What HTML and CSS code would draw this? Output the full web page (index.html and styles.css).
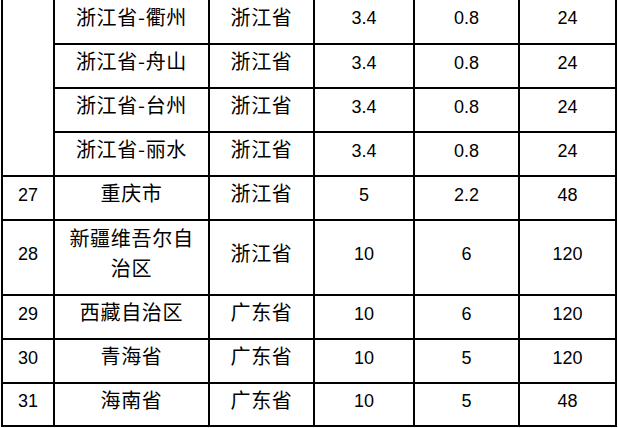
FILE: index.html
```html
<!DOCTYPE html>
<html lang="zh">
<head>
<meta charset="utf-8">
<title>表格</title>
<link rel="stylesheet" href="styles.css">
</head>
<body>
<table class="grid">
  <colgroup>
    <col class="c1"><col class="c2"><col class="c3"><col class="c4"><col class="c5"><col class="c6">
  </colgroup>
  <tbody>
    <tr class="first">
      <td class="idx" rowspan="4"></td>
      <td class="zh">浙江省-衢州</td><td class="zh">浙江省</td><td class="num">3.4</td><td class="num">0.8</td><td class="num">24</td>
    </tr>
    <tr>
      <td class="zh">浙江省-舟山</td><td class="zh">浙江省</td><td class="num">3.4</td><td class="num">0.8</td><td class="num">24</td>
    </tr>
    <tr>
      <td class="zh">浙江省-台州</td><td class="zh">浙江省</td><td class="num">3.4</td><td class="num">0.8</td><td class="num">24</td>
    </tr>
    <tr>
      <td class="zh">浙江省-丽水</td><td class="zh">浙江省</td><td class="num">3.4</td><td class="num">0.8</td><td class="num">24</td>
    </tr>
    <tr>
      <td class="idx num">27</td><td class="zh">重庆市</td><td class="zh">浙江省</td><td class="num">5</td><td class="num">2.2</td><td class="num">48</td>
    </tr>
    <tr class="tall">
      <td class="idx num">28</td><td class="zh">新疆维吾尔自治区</td><td class="zh">浙江省</td><td class="num">10</td><td class="num">6</td><td class="num">120</td>
    </tr>
    <tr>
      <td class="idx num">29</td><td class="zh">西藏自治区</td><td class="zh">广东省</td><td class="num">10</td><td class="num">6</td><td class="num">120</td>
    </tr>
    <tr>
      <td class="idx num">30</td><td class="zh">青海省</td><td class="zh">广东省</td><td class="num">10</td><td class="num">5</td><td class="num">120</td>
    </tr>
    <tr class="last">
      <td class="idx num">31</td><td class="zh">海南省</td><td class="zh">广东省</td><td class="num">10</td><td class="num">5</td><td class="num">48</td>
    </tr>
  </tbody>
</table>
</body>
</html>
```
FILE: styles.css
```css
html, body {
  margin: 0;
  padding: 0;
  background: #ffffff;
}

body {
  overflow: hidden;
  color: #000000;
}

.grid {
  margin-left: 1px;
  width: 616px;
  table-layout: fixed;
  border-collapse: separate;
  border-spacing: 0;
}

.c1 { width: 54px; }
.c2 { width: 155px; }
.c3 { width: 105px; }
.c4 { width: 100px; }
.c5 { width: 105px; }
.c6 { width: 97px; }

.grid tr { height: 44px; }
.grid tr.first { height: 45px; }
.grid tr.tall { height: 75px; }
.grid tr.last { height: 43px; }

.grid td {
  box-sizing: border-box;
  padding: 0 7px 7px;
  border-right: 2px solid #000;
  border-bottom: 2px solid #000;
  text-align: center;
  vertical-align: middle;
}

.grid td.idx {
  border-left: 2px solid #000;
}

.grid td.zh {
  padding-bottom: 10px;
  font-family: "Noto Sans CJK SC", "Noto Sans", sans-serif;
  font-size: 20px;
  letter-spacing: 0.7px;
  line-height: 30px;
}

.num {
  font-family: "Liberation Sans", Arial, sans-serif;
  font-size: 18px;
  line-height: 24px;
}
```
